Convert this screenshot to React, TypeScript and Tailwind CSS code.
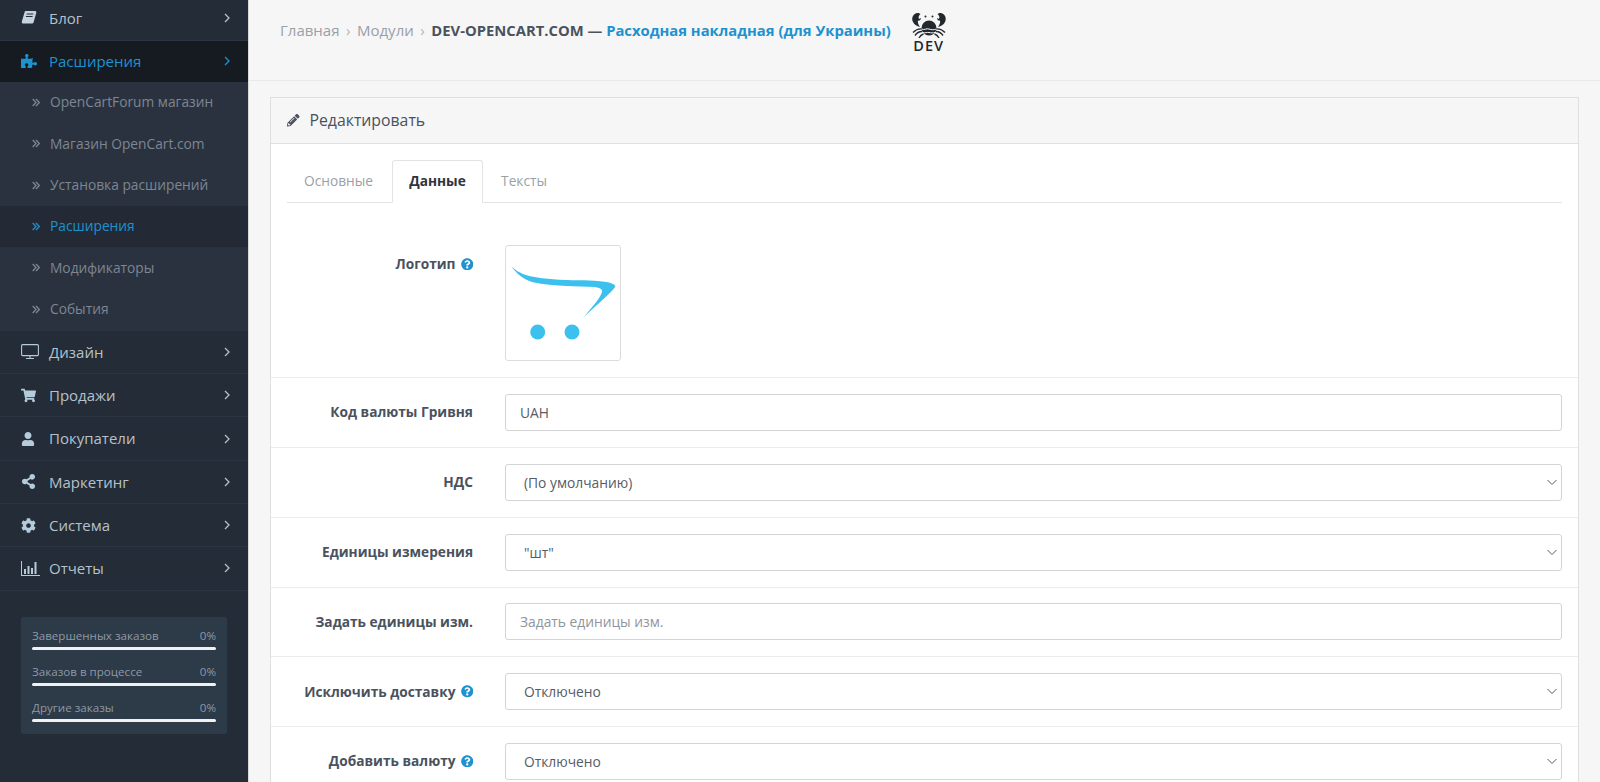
import { FaPuzzlePiece, FaShoppingCart, FaUser, FaShareAlt, FaCog, FaPencilAlt, FaQuestionCircle } from "react-icons/fa";
import type { ReactNode } from "react";

const font = "font-['Open_Sans',sans-serif]";

function BookIcon() {
  return (
    <svg width="16" height="16" viewBox="0 0 16 16" fill="currentColor">
      <path d="M5 1h9.200c.9 0 1.400.8 1.100 1.700l-2.600 9.200c-.3 1.100-1.100 1.700-2.100 1.700H2.500C1.200 13.600.5 12.500.9 11.200L3.500 2.400C3.800 1.500 4.300 1 5 1z" />
      <path d="M5.600 4h6.700M4.900 6.500h6.700" stroke="#252c37" strokeWidth="1" />
    </svg>
  );
}

function DesktopIcon() {
  return (
    <svg width="18" height="16" viewBox="0 0 18 16" fill="none" stroke="currentColor" strokeWidth="1.100">
      <rect x="0.600" y="0.600" width="16.800" height="11" rx="1" />
      <path d="M9 11.600v2.400M5 14.500h8" />
    </svg>
  );
}

function ChartIcon() {
  return (
    <svg width="19" height="15" viewBox="0 0 19 15" fill="currentColor">
      <path d="M0 0h1v14h18v1H0z" />
      <path d="M3 8h2v5H3zM6.500 5h2v8h-2zM10 7h2v6h-2zM13.500 1h2v12h-2z" />
    </svg>
  );
}

function Chevron() {
  return (
    <svg width="6" height="10" viewBox="0 0 6 10" fill="none" stroke="currentColor" strokeWidth="1.300">
      <path d="M1 1l4 4-4 4" />
    </svg>
  );
}

function DoubleChevron() {
  return (
    <svg width="8" height="9" viewBox="0 0 8 9" fill="none" stroke="currentColor" strokeWidth="1.300">
      <path d="M.7 1l3.300 3.500L.7 8M4 1l3.300 3.500L4 8" />
    </svg>
  );
}

function NavRow({ icon, label }: { icon: ReactNode; label: string }) {
  return (
    <div className="h-[43.300px] flex items-center border-b border-[#2b3440] pl-[21px] pr-[18px] text-[15px] text-[#b5c1cc]">
      <span className="w-[28px] flex text-[#b4cbdc]">{icon}</span>
      <span className="flex-1">{label}</span>
      <Chevron />
    </div>
  );
}

function SubRow({ label, active }: { label: string; active?: boolean }) {
  return (
    <div className={`h-[41.300px] flex items-center pl-[32px] text-[13.750px] ${active ? "bg-[#232a35] text-[#1e91cf]" : "text-[#7d8691]"}`}>
      <span className="w-[18px] flex"><DoubleChevron /></span>
      <span>{label}</span>
    </div>
  );
}

function Stat({ label }: { label: string }) {
  return (
    <div className="h-[36px] pt-[10px]">
      <div className="flex justify-between text-[11.600px] leading-[16px] text-[#8d99a5]">
        <span>{label}</span>
        <span>0%</span>
      </div>
      <div className="h-[3px] mt-[3px] rounded-full bg-[#f1f1f1]" />
    </div>
  );
}

function Help() {
  return <FaQuestionCircle className="inline text-[12.500px] text-[#1e91cf] ml-[5px] align-[-1px]" />;
}

function Row({ label, help, children }: { label: string; help?: boolean; children: ReactNode }) {
  return (
    <div className="h-[69.850px] flex items-center border-t border-[#ededed]">
      <label className="w-[202px] text-right text-[13.700px] font-bold text-[#4a525e]">
        {label}
        {help && <Help />}
      </label>
      <div className="flex-1 ml-[32px] mr-[16px]">{children}</div>
    </div>
  );
}

function TextInput({ value, placeholder }: { value?: string; placeholder?: string }) {
  return (
    <input
      readOnly
      value={value}
      placeholder={placeholder}
      className="block w-full h-[37px] rounded-[3px] border border-[#d4d4d4] bg-white px-[14px] text-[13.800px] text-[#555c66] placeholder:text-[#8f959c] outline-none"
    />
  );
}

function Select({ value }: { value: string }) {
  return (
    <div className="relative">
      <select className="block w-full h-[37px] appearance-none rounded-[3px] border border-[#d4d4d4] bg-white pl-[18px] pt-[2px] text-[13.800px] text-[#555c66] outline-none">
        <option>{value}</option>
      </select>
      <svg className="absolute right-[5px] top-[15px]" width="10" height="7" viewBox="0 0 10 7" fill="none" stroke="#555c66" strokeWidth="1">
        <path d="M.5 1l4.500 4.500L9.500 1" />
      </svg>
    </div>
  );
}

function CrabLogo() {
  const claw = (
    <>
      <path d="M6 1C2 2 0 6 2 10c1.500 3 4 4 7 5-2-3-2.500-5-2-6.500 1 .5 3-.5 3-2.500L8 7c-1-2 0-4 1.500-5C8 1 7 .8 6 1z" fill="currentColor" stroke="none" />
      <path d="M11 17c-3-.5-6 .5-9 3.500M11 19.500c-3 0-5 1-7 4M12.500 22c-2 .5-3.500 2-4.500 4" strokeWidth="1.400" />
    </>
  );
  return (
    <div className="flex flex-col items-center w-[36px] mt-[12px] ml-[20px] text-[#23282f]">
      <svg width="36" height="26" viewBox="0 0 36 26" fill="none" stroke="currentColor">
        {claw}
        <g transform="translate(36 0) scale(-1 1)">{claw}</g>
        <circle cx="14.500" cy="4.500" r="1" fill="currentColor" stroke="none" />
        <circle cx="21.500" cy="4.500" r="1" fill="currentColor" stroke="none" />
        <circle cx="18" cy="16" r="7.500" fill="currentColor" stroke="none" />
        <path d="M10.500 17c2.500 1.500 5-1 7.500 0s5 1 7.500 0M12 20.500c2 1 4-.5 6 0s4 .5 6 0" stroke="#f6f6f6" strokeWidth="1" />
      </svg>
      <span className="mt-[1px] text-[14.500px] leading-[13px] font-semibold tracking-[1px]">DEV</span>
    </div>
  );
}

function CartLogo() {
  return (
    <svg width="106" height="76" viewBox="0 0 106 76" fill="#3cc1ef">
      <path d="M1 1C6 6 13 10 23 11.700 35 14 47 14.500 57 15c15 .5 31 0 42 2.500 5 1.500 7 3 6 4.500-2 4-15 15-31 30 6-8 16-18 18-25 .5-3-2-4-7-5-10-.5-20-.5-28-1-12-.5-24-1.500-34-3.700C13 14.500 6 8 1 1z" />
      <circle cx="27.700" cy="67" r="7.500" />
      <circle cx="62" cy="67" r="7.500" />
    </svg>
  );
}

export default function App() {
  return (
    <div className={`${font} flex h-[782px] w-[1600px] overflow-hidden bg-[#f6f6f6]`}>
      <aside className="w-[249px] shrink-0 bg-[#242c37] border-r border-[#d9d9d9]">
        <div className="h-[40.700px] flex items-center border-b border-[#2b3440] pb-[3px] pl-[21px] pr-[18px] text-[15px] text-[#b5c1cc]">
          <span className="w-[28px] flex text-[#c3d3df]"><BookIcon /></span>
          <span className="flex-1">Блог</span>
          <Chevron />
        </div>
        <div className="h-[41.300px] flex items-center bg-[#161b22] pl-[21px] pr-[18px] text-[15px] text-[#1e91cf]">
          <span className="w-[28px] flex"><FaPuzzlePiece className="text-[16px]" /></span>
          <span className="flex-1">Расширения</span>
          <Chevron />
        </div>
        <div className="bg-[#2a3240] pb-[1px]">
          <SubRow label="OpenCartForum магазин" />
          <SubRow label="Магазин OpenCart.com" />
          <SubRow label="Установка расширений" />
          <SubRow label="Расширения" active />
          <SubRow label="Модификаторы" />
          <SubRow label="События" />
        </div>
        <NavRow icon={<DesktopIcon />} label="Дизайн" />
        <NavRow icon={<FaShoppingCart className="text-[15px]" />} label="Продажи" />
        <NavRow icon={<FaUser className="text-[14px]" />} label="Покупатели" />
        <NavRow icon={<FaShareAlt className="text-[15px]" />} label="Маркетинг" />
        <NavRow icon={<FaCog className="text-[15px]" />} label="Система" />
        <NavRow icon={<ChartIcon />} label="Отчеты" />
        <div className="mt-[26px] mx-[21px] h-[117px] rounded-[2px] bg-[#2d3a48] px-[11px] pt-[1px]">
          <Stat label="Завершенных заказов" />
          <Stat label="Заказов в процессе" />
          <Stat label="Другие заказы" />
        </div>
      </aside>

      <main className="flex-1 min-w-0">
        <header className="h-[81px] flex items-start border-b border-[#e9e9e9] pl-[31px]">
          <div className="pt-[19px] text-[15px] leading-[22px] text-[#9aa0a6] flex whitespace-nowrap">
            <span>Главная</span>
            <span className="mx-[6.500px] text-[#b5b5b5]">›</span>
            <span>Модули</span>
            <span className="mx-[6.500px] text-[#b5b5b5]">›</span>
            <span className="font-bold text-[14.800px] text-[#4a525e]">DEV-OPENCART.COM — <span className="text-[#1e91cf]">Расходная накладная (для Украины)</span></span>
          </div>
          <CrabLogo />
        </header>

        <section className="mt-[16px] ml-[21px] mr-[21px] border border-[#dfdfdf] bg-white">
          <div className="h-[46px] flex items-center border-b border-[#dfdfdf] bg-[#f6f6f6] pl-[16px] text-[15.800px] text-[#4a525e]">
            <FaPencilAlt className="text-[12.500px] mr-[10px]" />
            Редактировать
          </div>
          <div className="pt-[16px] mx-[16px] border-b border-[#e3e3e3] flex h-[59px] text-[13.700px]">
            <div className="w-[105px] h-[42px] pr-[2px] flex items-center justify-center text-[#9a9fa5]">Основные</div>
            <div className="w-[91px] h-[43px] pb-[1px] flex items-center justify-center font-bold text-[#2e3540] bg-white border border-b-white border-[#e3e3e3] rounded-t-[3px]">Данные</div>
            <div className="w-[82px] h-[42px] flex items-center justify-center text-[#9a9fa5]">Тексты</div>
          </div>
          <div className="flex pt-[42px] pb-[16px]">
            <label className="w-[202px] text-right text-[13.700px] font-bold text-[#4a525e] mt-[9px]">
              Логотип
              <Help />
            </label>
            <div className="ml-[32px] w-[116px] h-[116px] rounded-[3px] border border-[#dcdcdc] pl-[4px] pt-[19px]">
              <CartLogo />
            </div>
          </div>
          <Row label="Код валюты Гривня"><TextInput value="UAH" /></Row>
          <Row label="НДС"><Select value="(По умолчанию)" /></Row>
          <Row label="Единицы измерения"><Select value={'"шт"'} /></Row>
          <Row label="Задать единицы изм."><TextInput placeholder="Задать единицы изм." /></Row>
          <Row label="Исключить доставку" help><Select value="Отключено" /></Row>
          <Row label="Добавить валюту" help><Select value="Отключено" /></Row>
        </section>
      </main>
    </div>
  );
}
